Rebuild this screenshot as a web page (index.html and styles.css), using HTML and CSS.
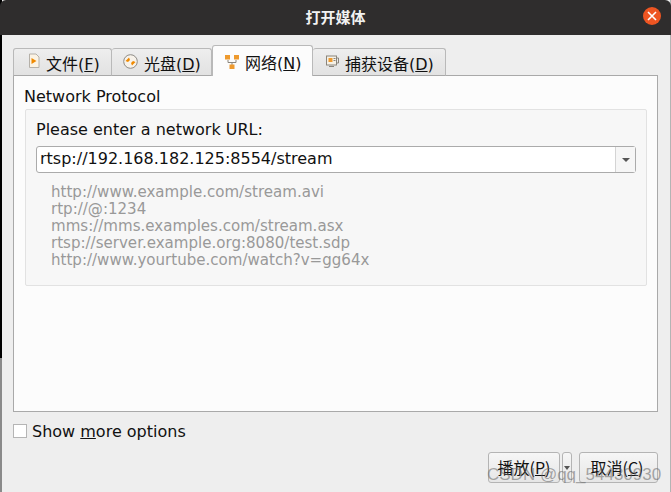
FILE: index.html
```html
<!DOCTYPE html>
<html lang="en">
<head>
  <meta charset="UTF-8">
  <title>打开媒体</title>
  <link rel="stylesheet" href="styles.css">
</head>
<body>

<div class="window">
  <div class="edge"></div>
  <div class="titlebar">
    <span class="title">打开媒体</span>
    <span class="close">
      <svg width="12" height="12" viewBox="0 0 12 12"><path d="M2 2 L10 10 M10 2 L2 10" stroke="#fff" stroke-width="1.6"/></svg>
    </span>
  </div>

  <div class="content">
    <div class="tabs">
      <div class="tab tab-file">
        <svg width="14" height="16" viewBox="0 0 14 16"><path d="M2.5 1 H9 L12 4 V14.5 H2.5 Z" fill="#fbf3e4" stroke="#b5b0a8"/><path d="M4.5 5 L9.5 8 L4.5 11 Z" fill="#f08a00"/></svg>
        <span>文件(<u>F</u>)</span>
      </div>
      <div class="tab tab-disc">
        <svg width="15" height="15" viewBox="0 0 15 15"><circle cx="7.5" cy="7.5" r="6.8" fill="#f7f2ea" stroke="#8d8a85"/><path d="M2.5 7 L6 3.5 L7 6 L5 8 Z M12.5 8 L9 11.5 L8 9 L10 7 Z" fill="#f08a00"/></svg>
        <span>光盘(<u>D</u>)</span>
      </div>
      <div class="tab active tab-net">
        <svg width="14" height="14" viewBox="0 0 14 14"><path d="M3 5 V7.5 H11 V5 M7 7.5 V10" fill="none" stroke="#8a857c"/><rect x="0" y="0" width="5" height="4.5" fill="#ee9a2e"/><rect x="9" y="0" width="5" height="4.5" fill="#ee9a2e"/><rect x="4.5" y="9.5" width="5" height="4.5" fill="#ee9a2e"/></svg>
        <span>网络(<u>N</u>)</span>
      </div>
      <div class="tab tab-capture">
        <svg width="14" height="14" viewBox="0 0 14 14"><rect x="1.5" y="2" width="10" height="9" fill="#f6f1e6" stroke="#8a857c"/><rect x="3.5" y="4" width="4" height="4" fill="#ee9a2e"/><path d="M8.5 4.5 H10.5 M8.5 6.5 H10.5 M4 12.5 H9" stroke="#8a857c"/><path d="M12 4 H13.5 V9 H12" fill="none" stroke="#8a857c"/></svg>
        <span>捕获设备(<u>D</u>)</span>
      </div>
    </div>

    <div class="panel">
      <div class="panel-title">Network Protocol</div>
      <div class="group">
        <div class="group-label">Please enter a network URL:</div>
        <div class="combo">
          <span class="combo-text">rtsp://192.168.182.125:8554/stream</span>
          <span class="combo-arrow"><i class="arrow"></i></span>
        </div>
        <div class="examples">
          <div>http://www.example.com/stream.avi</div>
          <div>rtp://@:1234</div>
          <div>mms://mms.examples.com/stream.asx</div>
          <div>rtsp://server.example.org:8080/test.sdp</div>
          <div>http://www.yourtube.com/watch?v=gg64x</div>
        </div>
      </div>
    </div>

    <label class="more">
      <span class="checkbox"></span>
      <span>Show <u>m</u>ore options</span>
    </label>

    <div class="buttons">
      <div class="btn btn-play">播放(<u>P</u>)</div>
      <div class="btn btn-drop"><i class="arrow"></i></div>
      <div class="btn btn-cancel">取消(<u>C</u>)</div>
    </div>
  </div>

  <div class="watermark">CSDN @qq_54430930</div>
</div>

</body>
</html>
```

FILE: styles.css
```css
* {
  box-sizing: border-box;
}
html, body {
  margin: 0;
  height: 100%;
  background: #eeeeee;
  overflow: hidden;
}
body {
  font-family: "DejaVu Sans", "Noto Sans CJK SC", sans-serif;
  font-size: 16px;
  color: #111;
}
.window {
  position: relative;
  height: 492px;
  display: flex;
  flex-direction: column;
  border-left: 2px solid #8a8a8a;
  border-right: 1px solid #b4b4b4;
}
/* desktop showing behind the dialog */
.edge {
  position: absolute;
  left: -2px;
  top: 0;
  width: 2px;
  height: 358px;
  background: #000;
}
.titlebar {
  height: 35px;
  margin-left: -2px;
  margin-right: -1px;
  background: #2f2d2d;
  border-radius: 6px 6px 0 0;
  display: flex;
  align-items: center;
  justify-content: center;
  position: relative;
}
.title {
  font-family: "Noto Sans CJK SC", sans-serif;
  font-weight: 700;
  font-size: 15px;
  color: #f2f2f2;
  margin-top: -2px;
}
.close {
  position: absolute;
  right: 10px;
  top: 7px;
  width: 18px;
  height: 18px;
  border-radius: 50%;
  background: #ee5522;
  display: flex;
  align-items: center;
  justify-content: center;
}
.content {
  flex: 1;
  display: flex;
  flex-direction: column;
  padding: 10px 12px 0 11px;
}
.tabs {
  display: flex;
  align-items: flex-end;
  height: 31px;
  margin-bottom: -1px;
  position: relative;
  z-index: 1;
}
.tab {
  height: 28px;
  display: flex;
  align-items: center;
  gap: 6px;
  background: linear-gradient(#eeeeee, #e2e2e2);
  border: 1px solid #b9b9b9;
  border-bottom: 1px solid #a8a8a8;
  border-left-width: 0;
  border-radius: 3px 3px 0 0;
  padding-left: 11px;
}
.tab svg {
  margin-bottom: 2px;
}
.tab span {
  line-height: 20px;
  margin-top: 5px;
}
.tab:first-child {
  border-left-width: 1px;
}
.tab-file {
  width: 99px;
  padding-left: 13px;
  gap: 5px;
}
.tab-disc {
  width: 100px;
}
.tab-net {
  width: 101px;
}
.tab-capture {
  width: 133px;
  padding-left: 12px;
}
.tab.active {
  height: 31px;
  background: #fcfcfc;
  border-bottom: 0;
  border-left-width: 1px;
  padding-left: 12px;
}
.tab.active svg {
  margin-bottom: 0;
  margin-top: 2px;
}
.tab.active span {
  margin-top: 6px;
}
.panel {
  height: 337px;
  background: #fcfcfc;
  border: 1px solid #a9a9a9;
  padding: 11px 10px 0 11px;
}
.panel-title {
  line-height: 20px;
  margin-bottom: 2px;
  margin-left: -1px;
}
.group {
  height: 177px;
  background: #f7f7f7;
  border: 1px solid #e2e2e2;
  border-radius: 2px;
  padding: 10px 10px 0 10px;
}
.group-label {
  line-height: 20px;
  margin-bottom: 6px;
}
.combo {
  height: 27px;
  display: flex;
  background: #fff;
  border: 1px solid #ababab;
  border-radius: 3px;
  margin-bottom: 10px;
}
.combo-text {
  flex: 1;
  padding-left: 3px;
  line-height: 24px;
  color: #111;
}
.combo-arrow {
  width: 20px;
  border-left: 1px solid #d4d4d4;
  background: #f6f6f6;
  display: flex;
  align-items: center;
  justify-content: center;
}
.arrow {
  display: block;
  width: 0;
  height: 0;
  border-left: 4px solid transparent;
  border-right: 4px solid transparent;
  border-top: 4px solid #555;
}
.examples {
  padding-left: 15px;
  padding-top: 1px;
  font-size: 15.05px;
  line-height: 17px;
  color: #999999;
}
.more {
  display: flex;
  align-items: center;
  gap: 5px;
  margin-top: 11px;
  height: 16px;
}
.checkbox {
  width: 14px;
  height: 14px;
  background: #fff;
  border: 1px solid #b5b5b5;
}
.buttons {
  display: flex;
  justify-content: flex-end;
  margin-top: 13px;
  font-family: "Noto Sans CJK SC", sans-serif;
  font-size: 16px;
}
.btn {
  height: 31px;
  background: linear-gradient(#f6f6f6, #e6e6e6);
  border: 1px solid #b4b4b4;
  border-radius: 3px;
  display: flex;
  align-items: center;
  justify-content: center;
  padding-bottom: 2px;
}
.btn-play {
  width: 72px;
  margin-right: 2px;
}
.btn-drop {
  width: 10px;
  margin-right: 7px;
  padding-bottom: 0;
}
.btn-drop .arrow {
  border-left-width: 3px;
  border-right-width: 3px;
}
.btn-cancel {
  width: 79px;
  padding-right: 3px;
}
.watermark {
  position: absolute;
  left: 485px;
  top: 465px;
  font-family: "Liberation Sans", sans-serif;
  font-size: 17px;
  color: rgba(100, 100, 100, 0.55);
  white-space: nowrap;
}
```
